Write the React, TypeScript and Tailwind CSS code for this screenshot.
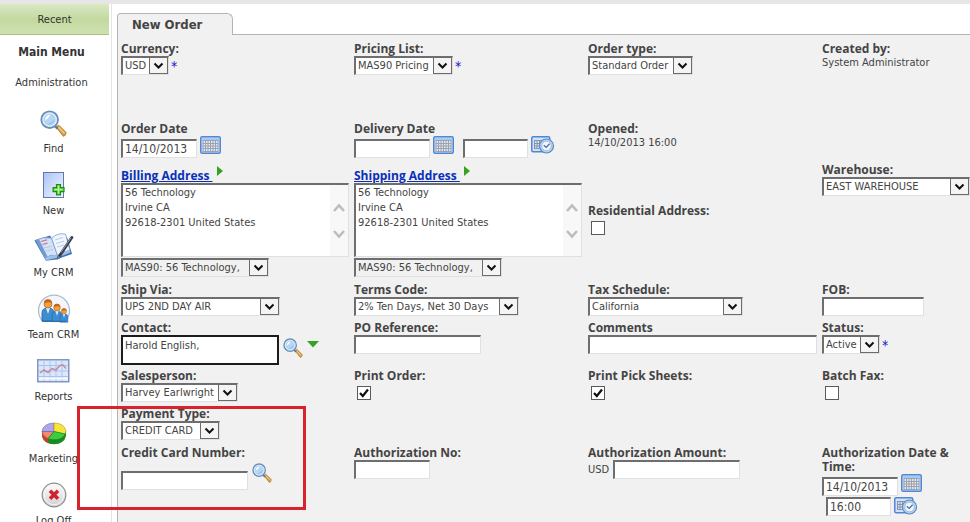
import { useId } from 'react';
import type { ReactNode } from 'react';
import { clsx } from 'clsx';

const sunken = 'border-t-2 border-l-2 border-r border-b border-t-[#6e6e6e] border-l-[#6e6e6e] border-r-[#e0e0e0] border-b-[#e0e0e0] rounded-none outline-none';
const bold = "font-bold text-xs leading-[14px] font-['Open_Sans','DejaVu_Sans_Condensed',sans-serif]";

function Magnifier({ className }: { className: string }) {
    return (
        <svg viewBox="0 0 26 26" className={className} aria-hidden="true">
            <path d="M15.5 16.5 L18 14.5 L25 21.5 Q25.6 24.6 22.5 25.4 Z" fill="#d39a45" stroke="#a9742c" strokeWidth="0.7" />
            <path d="M17.6 16.4 L23.6 22.6" stroke="#f6d089" strokeWidth="1.3" />
            <path d="M14 15 L17 18" stroke="#6d7680" strokeWidth="2.4" />
            <circle cx="9.3" cy="9.3" r="8" fill="#b9d8f4" stroke="#6a8fb5" strokeWidth="1.8" />
            <circle cx="9.3" cy="9.3" r="6.4" fill="#b5d5f5" stroke="#e6f1fc" strokeWidth="1" />
            <path d="M5 10 Q5 5 10 4.6 Q8.5 8 5 10Z" fill="#ffffff" />
            <path d="M7 14 Q13 14.5 14.2 8.5 Q12.5 12 7 14Z" fill="#8bbbe6" />
        </svg>
    );
}

function NewIcon() {
    return (
        <svg viewBox="0 0 22 26" className="w-[22px] h-[26px]" aria-hidden="true">
            <defs>
                <linearGradient id="page" x1="0" y1="0" x2="1" y2="1">
                    <stop offset="0" stopColor="#a9c3f7" />
                    <stop offset="1" stopColor="#f2f7ff" />
                </linearGradient>
            </defs>
            <rect x="0.5" y="0.5" width="20" height="25" fill="url(#page)" stroke="#6478a8" />
            <path d="M13.5 12.5h4v3.2h3.5v4h-3.5v3.2h-4v-3.2h-3.4v-4h3.4z" fill="#6be043" stroke="#1f8a1c" strokeWidth="1.2" />
            <path d="M15.5 14v7.4M11.6 17.6h7.8" stroke="#c4f7a2" strokeWidth="1" />
        </svg>
    );
}

function MyCrmIcon() {
    return (
        <svg viewBox="0 0 40 30" className="w-10 h-[30px]" aria-hidden="true">
            <path d="M0.5 8.5 L16 3.5 L17.5 6 L33 5 L38 22 L22 27.5 L12 28.8 Z" fill="#3f6fb0" />
            <path d="M2 8 L11 26 Q17 22 23.5 23.5 L17.5 6 Q9 4.5 2 8Z" fill="#d3e2f7" stroke="#6c8fc2" strokeWidth="0.8" />
            <path d="M17.5 6 Q24 0.5 31.5 2 L36 18.5 Q29 19 23.5 23.5Z" fill="#eef5ff" stroke="#7d9fcd" strokeWidth="0.8" />
            <path d="M2 8 L11 26 L13.5 24.6 L5 7.2Z" fill="#6f9bd6" />
            <path d="M11 26 Q17 22 23.5 23.5 Q29 19 36 18.5 L36.5 20.5 L24 25.5 L12 28.4Z" fill="#9dc0ea" />
            <path d="M7 9.5l6-1.6M8.5 12.5l5-1.4" stroke="#c9788c" strokeWidth="1.1" />
            <path d="M10 16l8-1.8M12 19l7-1.6M21 8l8-2.6M22 11.5l8-2.4M23 15l7-2" stroke="#b4c6de" strokeWidth="0.9" />
            <path d="M37.8 5.5 L24.5 25.5" stroke="#3a3d48" strokeWidth="3" strokeLinecap="round" />
            <path d="M37 5.8 L27 20.5" stroke="#9096a5" strokeWidth="1" />
            <path d="M24.2 23.6 L22.5 28.5 L26.4 25.6Z" fill="#6c86ad" />
        </svg>
    );
}

function Person({ x, y, s }: { x: number; y: number; s: number }) {
    return (
        <g transform={`translate(${x} ${y}) scale(${s})`}>
            <path d="M-6 19 V11 Q-6 6 0 6 Q6 6 6 11 V19 Z" fill="#3d8ed0" stroke="#1c62a4" strokeWidth="0.8" />
            <path d="M-2 6 L0 12 L2 6Z" fill="#d9ecfb" />
            <circle cx="0" cy="2" r="4" fill="#f0a040" stroke="#b3631b" strokeWidth="0.7" />
            <path d="M-4 1.5 Q-4 -3 0 -2.8 Q4 -3 4 1.5 Q1 -0.8 -4 1.5Z" fill="#c4651a" />
        </g>
    );
}

function TeamIcon() {
    return (
        <svg viewBox="0 0 34 30" className="w-[34px] h-[30px]" aria-hidden="true">
            <path d="M5.5 27 A15.5 15.5 0 1 1 28.5 27 Z" fill="#f3f7fb" stroke="#a9bccf" strokeWidth="1.2" />
            <Person x={11} y={8} s={1} />
            <Person x={20} y={12} s={0.82} />
            <Person x={27} y={16} s={0.64} />
            <path d="M5 27.3 H29" stroke="#2f6ca8" strokeWidth="1.2" />
        </svg>
    );
}

function ReportsIcon() {
    return (
        <svg viewBox="0 0 33 24" className="w-[33px] h-6" aria-hidden="true">
            <rect x="0.75" y="0.75" width="31" height="22" fill="#dbe8fb" stroke="#8197c4" strokeWidth="1.5" />
            <path d="M2 6.5h29M2 12h29M2 17.5h29M7 2v20M13 2v20M19 2v20M25 2v20" stroke="#a9c4ea" strokeWidth="1" />
            <path d="M3 14 L7 11 L11 13.5 L15 9.5 L19 11 L23 6.5 L26 6 L29 9.5" fill="none" stroke="#c08ba4" strokeWidth="1.5" />
            <path d="M2 19.5 H31" stroke="#f5f9ff" strokeWidth="2" />
        </svg>
    );
}

function MarketingIcon() {
    return (
        <svg viewBox="0 0 26 23" className="w-[26px] h-[23px]" aria-hidden="true">
            <path d="M1 9 V14 Q3 22 13 22.3 Q23 22 25 14 V9Z" fill="#188a1f" />
            <path d="M1 9 V14 Q2 19 7.5 21.2 V15Z" fill="#c1432c" />
            <path d="M13 9.5 L7 16.7 Q1 14 1 9.5Z" fill="#f08a72" stroke="#a8412c" strokeWidth="0.6" />
            <path d="M13 9.5 L1 9.5 Q2 1.5 13 1Z" fill="#b1a6ec" stroke="#6d62b3" strokeWidth="0.6" />
            <path d="M13 9.5 L13 1 Q23 1 25 9 L24 12Z" fill="#f7e53c" stroke="#a8941c" strokeWidth="0.6" />
            <path d="M13 9.5 L24.4 12 Q21 18 13 17.8 Q9.5 17.8 7 16.7Z" fill="#3ccc42" stroke="#17801d" strokeWidth="0.6" />
        </svg>
    );
}

function LogOffIcon() {
    return (
        <svg viewBox="0 0 26 26" className="w-[26px] h-[26px]" aria-hidden="true">
            <defs>
                <linearGradient id="knob" x1="0" y1="0" x2="0" y2="1">
                    <stop offset="0" stopColor="#ffffff" />
                    <stop offset="1" stopColor="#cfcfcf" />
                </linearGradient>
            </defs>
            <circle cx="13" cy="13" r="11.8" fill="url(#knob)" stroke="#8f8f8f" strokeWidth="1.2" />
            <circle cx="13" cy="13" r="9.8" fill="none" stroke="#f6f6f6" strokeWidth="1" />
            <path d="M9 8.7 L17 16.7 M17 8.7 L9 16.7" stroke="#d3202c" strokeWidth="3.6" />
        </svg>
    );
}

function CalendarIcon() {
    return (
        <svg viewBox="0 0 21 18" className="w-[21px] h-[18px]" aria-hidden="true">
            <rect x="0.75" y="0.75" width="19.5" height="16.5" rx="1.5" fill="#cfe2fa" stroke="#4f86d6" strokeWidth="1.5" />
            <rect x="2" y="2" width="17" height="2" fill="#a9c9f3" />
            <rect x="2.5" y="4" width="16" height="12" fill="#e3e7ee" />
            <path d="M2.5 4.5h16M2.5 7.5h16M2.5 10h16M2.5 12.5h16M2.5 15.5h16M3 4.5v11M5.5 4.5v11M8 4.5v11M10.5 4.5v11M13 4.5v11M15.5 4.5v11M18 4.5v11" stroke="#9aa3b3" strokeWidth="1" />
        </svg>
    );
}

function TimeIcon() {
    return (
        <svg viewBox="0 0 24 18" className="w-6 h-[18px]" aria-hidden="true">
            <rect x="0.75" y="0.75" width="18" height="15" rx="1.5" fill="#cfe2fa" stroke="#4f86d6" strokeWidth="1.5" />
            <path d="M3 4.5h8M3 7.5h6M3 10h5M3 12.5h5M3.5 4v9M6 4v9M8.5 4v6" stroke="#8a94a6" strokeWidth="1" />
            <circle cx="15.5" cy="10" r="7" fill="#b9d3f1" stroke="#5d88bd" strokeWidth="1.2" />
            <circle cx="15.5" cy="10" r="4.8" fill="#eff6fd" stroke="#93b3da" strokeWidth="0.8" />
            <path d="M12.8 9.2 L15.2 11.4 L18.6 7.8" fill="none" stroke="#4b6f9e" strokeWidth="1.3" />
        </svg>
    );
}

const menu = [
    { name: 'Find', icon: <Magnifier className="w-[27px] h-[27px]" /> },
    { name: 'New', icon: <NewIcon /> },
    { name: 'My CRM', icon: <MyCrmIcon /> },
    { name: 'Team CRM', icon: <TeamIcon /> },
    { name: 'Reports', icon: <ReportsIcon /> },
    { name: 'Marketing', icon: <MarketingIcon /> },
    { name: 'Log Off', icon: <LogOffIcon /> },
];

function Sidebar() {
    return (
        <nav className="w-28 shrink-0 border-r border-[#e4e4e4] text-center text-[#333]">
            <a href="#recent" className="block mr-0.5 h-[31px] leading-8 border-b border-[#a9c183] bg-linear-to-b from-[#dbe8c5] via-[#c3d99f] to-[#cfe1b2]">
                Recent
            </a>
            <h2 className="mt-2 mr-2 text-xs leading-[18px] font-bold">Main Menu</h2>
            <a href="#administration" className="block mt-3.5 mr-2 leading-4">Administration</a>
            <ul className="mt-4 mr-1 flex flex-col gap-3">
                {menu.map((item) => (
                    <li key={item.name}>
                        <a href="#menu" className="flex flex-col items-center gap-0.5 leading-4">
                            <span className="h-8 flex items-center">{item.icon}</span>
                            {item.name}
                        </a>
                    </li>
                ))}
            </ul>
        </nav>
    );
}

function Field({ label, id, className, children }: { label: string; id?: string; className?: string; children: ReactNode }) {
    return (
        <div className={clsx('flex flex-col items-start', className)}>
            {id ? <label htmlFor={id} className={bold}>{label}</label> : <span className={bold}>{label}</span>}
            {children}
        </div>
    );
}

function Select({ id, value, className, label, required }: { id?: string; value: string; className: string; label?: string; required?: boolean }) {
    return (
        <span className="flex max-w-full">
            <span className={clsx('relative block max-w-full', className)}>
                <select id={id} aria-label={label} className={clsx(sunken, 'appearance-none block w-full h-[19px] pl-0.5 pr-5 leading-4', label ? 'bg-[#f1f1f1]' : 'bg-white')}>
                    <option>{value}</option>
                </select>
                <svg viewBox="0 0 19 17" className="absolute right-px top-px w-[19px] h-[17px] pointer-events-none" aria-hidden="true">
                    <rect x="0.5" y="0.5" width="18" height="16" fill="#f4f4f4" stroke="#6b6b6b" />
                    <path d="M5.5 6.5 L9.5 10.5 L13.5 6.5" fill="none" stroke="#111" strokeWidth="2" />
                </svg>
            </span>
            {required && <span className="pl-0.5 pt-0.5 text-sm leading-4 text-[#1414c8]">*</span>}
        </span>
    );
}

function SelectField({ label, value, width, className, required }: { label: string; value: string; width: string; className?: string; required?: boolean }) {
    const id = useId();
    return (
        <Field label={label} id={id} className={className}>
            <Select id={id} value={value} className={width} required={required} />
        </Field>
    );
}

function TextBox({ id, value, className, label }: { id?: string; value?: string; className: string; label?: string }) {
    return (
        <input id={id} type="text" aria-label={label} defaultValue={value} className={clsx(sunken, 'h-[19px] px-0.5 text-xs bg-white', className)} />
    );
}

function TextField({ label, width, className }: { label: string; width: string; className?: string }) {
    const id = useId();
    return (
        <Field label={label} id={id} className={className}>
            <TextBox id={id} className={width} />
        </Field>
    );
}

function CheckField({ label, checked, className }: { label: string; checked?: boolean; className?: string }) {
    const id = useId();
    return (
        <Field label={label} id={id} className={className}>
            <span className="relative mt-[3px] ml-[3px] flex">
                <input id={id} type="checkbox" defaultChecked={checked} className="peer appearance-none w-3.5 h-3.5 bg-white border border-[#5a5a5a]" />
                <svg viewBox="0 0 14 14" className="absolute inset-0 w-3.5 h-3.5 hidden peer-checked:block pointer-events-none" aria-hidden="true">
                    <path d="M3 7 L5.8 10 L11 3.5" fill="none" stroke="#111" strokeWidth="2.2" />
                </svg>
            </span>
        </Field>
    );
}

function AddressField({ label }: { label: string }) {
    return (
        <div className="flex flex-col items-start pb-1.5">
            <div className="flex">
                <a href="#address" className={clsx(bold, 'text-[#0a2fb8] underline whitespace-pre')}>{label + ' '}</a>
                <svg viewBox="0 0 6 10" className="ml-1 -mt-[3px] w-1.5 h-2.5" aria-hidden="true">
                    <path d="M0 0 L6 5 L0 10Z" fill="#35a31f" />
                </svg>
            </div>
            <div className="relative w-full max-w-[228px] mb-px">
                <textarea
                    aria-label={label}
                    defaultValue={'56 Technology\nIrvine CA\n92618-2301 United States'}
                    className={clsx(sunken, 'block w-full h-[74px] resize-none overflow-hidden pl-0.5 pr-5 leading-[15px] bg-white')}
                />
                <div className="absolute right-px top-0.5 bottom-px w-[18px] bg-[#f8f8f8] flex flex-col items-center justify-center gap-4 pointer-events-none">
                    <svg viewBox="0 0 12 10" className="w-3 h-2.5" aria-hidden="true">
                        <path d="M1 8 L6 2.5 L11 8" fill="none" stroke="#bdbdbd" strokeWidth="2.6" />
                    </svg>
                    <svg viewBox="0 0 12 10" className="w-3 h-2.5" aria-hidden="true">
                        <path d="M1 2 L6 7.5 L11 2" fill="none" stroke="#bdbdbd" strokeWidth="2.6" />
                    </svg>
                </div>
            </div>
            <Select value="MAS90: 56 Technology," className="w-[148px]" label={label + ' list'} />
        </div>
    );
}

function IconButton({ label, children }: { label: string; children: ReactNode }) {
    return (
        <button type="button" aria-label={label} className="shrink-0">
            {children}
        </button>
    );
}

function OrderForm() {
    return (
        <form className="flex-1 border-l border-[#b4b4b4] bg-[#f1f1f1] pl-[3px] pt-[7px] leading-[14px] text-[#444] grid grid-cols-[233fr_234fr_234fr_148fr] content-start">
            <SelectField label="Currency:" value="USD" width="w-12" className="pb-[47px]" required />
            <SelectField label="Pricing List:" value="MAS90 Pricing" width="w-[99px]" required />
            <SelectField label="Order type:" value="Standard Order" width="w-[105px]" />
            <Field label="Created by:">System Administrator</Field>

            <Field label="Order Date" id="order-date" className="pb-[11px]">
                <span className="flex items-start gap-[3px]">
                    <TextBox id="order-date" value="14/10/2013" className="mt-[3px] w-[76px]" />
                    <IconButton label="Pick order date"><CalendarIcon /></IconButton>
                </span>
            </Field>
            <Field label="Delivery Date" id="delivery-date">
                <span className="flex items-start gap-[3px]">
                    <TextBox id="delivery-date" className="mt-[3px] w-[76px]" />
                    <IconButton label="Pick delivery date"><CalendarIcon /></IconButton>
                    <TextBox label="Delivery time" className="mt-[3px] ml-1.5 w-[65px]" />
                    <IconButton label="Pick delivery time"><TimeIcon /></IconButton>
                </span>
            </Field>
            <Field label="Opened:">14/10/2013 16:00</Field>
            <SelectField label="Warehouse:" value="EAST WAREHOUSE" width="w-[148px]" className="row-span-2 pt-[41px]" />

            <AddressField label="Billing Address" />
            <AddressField label="Shipping Address" />
            <CheckField label="Residential Address:" className="pt-[35px]" />

            <SelectField label="Ship Via:" value="UPS 2ND DAY AIR" width="w-[159px]" className="pb-[5px]" />
            <SelectField label="Terms Code:" value="2% Ten Days, Net 30 Days" width="w-[165px]" />
            <SelectField label="Tax Schedule:" value="California" width="w-[155px]" />
            <TextField label="FOB:" width="w-[102px]" />

            <Field label="Contact:" id="contact" className="pb-1">
                <span className="flex items-start gap-1">
                    <textarea id="contact" defaultValue="Harold English," className="w-[158px] h-[30px] border-2 border-[#1c1c1c] bg-white px-0.5 leading-[18px] resize-none overflow-hidden outline-none" />
                    <span className="flex items-start pt-[3px] gap-1">
                        <IconButton label="Find contact"><Magnifier className="w-5 h-5" /></IconButton>
                        <svg viewBox="0 0 12 7" className="mt-[3px] w-3 h-[7px]" aria-hidden="true">
                            <path d="M0 0 H12 L6 6.5Z" fill="#35a31f" />
                        </svg>
                    </span>
                </span>
            </Field>
            <TextField label="PO Reference:" width="w-[127px]" />
            <TextField label="Comments" width="w-full max-w-[229px]" />
            <SelectField label="Status:" value="Active" width="w-[58px]" required />

            <SelectField label="Salesperson:" value="Harvey Earlwright" width="w-[117px]" className="pb-[5px]" />
            <CheckField label="Print Order:" checked />
            <CheckField label="Print Pick Sheets:" checked />
            <CheckField label="Batch Fax:" />

            <SelectField label="Payment Type:" value="CREDIT CARD" width="w-[99px]" className="col-span-4 pb-1.5" />

            <Field label="Credit Card Number:" id="card-number">
                <span className="flex items-start gap-1 pt-[3px]">
                    <TextBox id="card-number" className="mt-2 w-[127px]" />
                    <IconButton label="Find card"><Magnifier className="w-5 h-5" /></IconButton>
                </span>
            </Field>
            <TextField label="Authorization No:" width="w-[76px]" />
            <Field label="Authorization Amount:" id="amount">
                <span className="flex items-center gap-1">
                    USD
                    <TextBox id="amount" className="w-[127px]" />
                </span>
            </Field>
            <Field label="Authorization Date & Time:" id="auth-date">
                <span className="flex items-start gap-[3px]">
                    <TextBox id="auth-date" value="14/10/2013" className="mt-[3px] w-[76px]" />
                    <IconButton label="Pick authorization date"><CalendarIcon /></IconButton>
                </span>
                <span className="flex items-start gap-[3px] ml-1 mt-px">
                    <TextBox label="Authorization time" value="16:00" className="w-[65px]" />
                    <IconButton label="Pick authorization time"><TimeIcon /></IconButton>
                </span>
            </Field>
        </form>
    );
}

export default function App() {
    return (
        <div className="relative h-screen overflow-hidden flex flex-col bg-white text-[11px] font-['DejaVu_Sans_Condensed','DejaVu_Sans',sans-serif]">
            <header className="h-1 shrink-0 bg-[#e6e6e6]" />
            <div className="flex flex-1 min-h-0">
                <Sidebar />
                <main className="flex-1 flex flex-col ml-[5px]">
                    <div className="flex items-end pt-[9px]">
                        <h1 className="w-[116px] h-[22px] pl-3.5 rounded-tl-sm rounded-tr-md border-t border-x border-[#b4b4b4] bg-[#f1f1f1] text-[13px] leading-[21px] font-bold text-[#444]">
                            New Order
                        </h1>
                        <div className="flex-1 border-b border-[#b4b4b4]" />
                    </div>
                    <OrderForm />
                </main>
            </div>
            {/* Payment section highlight */}
            <div className="absolute left-[77px] top-[406px] w-[229px] h-[104px] border-3 border-[#d8222c] pointer-events-none" />
        </div>
    );
}
